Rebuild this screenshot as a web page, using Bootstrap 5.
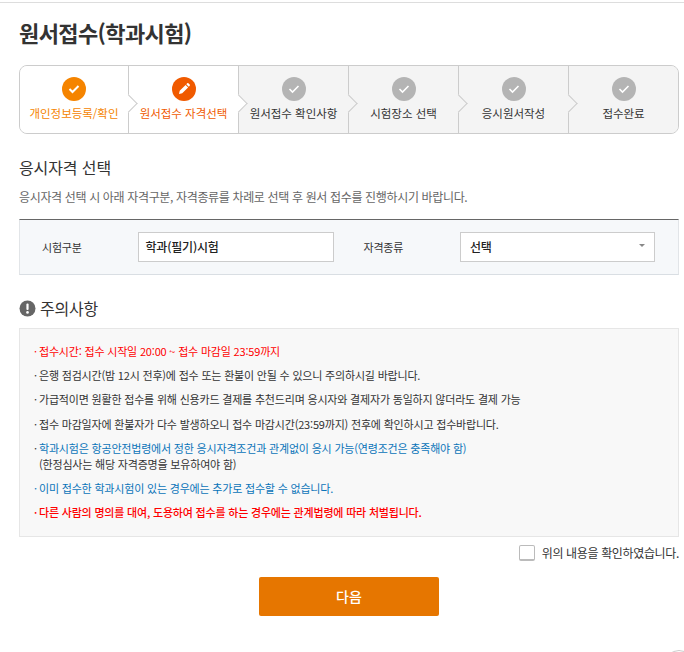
<!doctype html>
<html lang="ko">
<head>
<meta charset="utf-8">
<title>원서접수</title>
<link href="https://cdn.jsdelivr.net/npm/bootstrap@5.3.0/dist/css/bootstrap.min.css" rel="stylesheet">
<style>
html,body{height:652px;overflow:hidden;background:#fff}
body{font-family:"Noto Sans CJK KR","Noto Sans",sans-serif;font-size:11px;color:#333;letter-spacing:-.2px;position:relative}
.topline{height:3px;border-bottom:1px solid #ddd;background:#fff}
.wrap{padding:0 5px 0 19px}
.ptitle{font-size:22px;font-weight:700;line-height:34px;margin:12px 0 16px;color:#333;letter-spacing:-.6px}
.stepbar{height:69px;border:1px solid #ccc;border-radius:8px;background:#f4f4f4;overflow:hidden}
.stepitem{width:110px;position:relative;border-left:1px solid #ccc;padding-top:11px;font-size:11.5px;line-height:16px;color:#333;letter-spacing:-.02px}
.stepitem:first-child{border-left:0;width:108px}
.stepitem:last-child{flex:1 1 auto}
.stepitem.on{background:#fff}
.stepitem:not(:last-child)::after{content:"";position:absolute;right:-7px;top:31px;width:13px;height:13px;background:inherit;border-top:1px solid #ccc;border-right:1px solid #ccc;transform:rotate(45deg) ;z-index:2}
.stepitem:not(.on){background:#f4f4f4}
.stepdot{width:24px;height:24px;border-radius:50%;background:#b4b4b4;margin-bottom:4px}
.dot-a{background:#f58400}.dot-b{background:#f05a00}
.txt-a{color:#f58400}.txt-b{color:#f05a00}
.sechead{font-size:16px;font-weight:400;line-height:24px;margin:21px 0 10px;color:#333;letter-spacing:-.1px}
.secsub{font-size:12px;line-height:16px;color:#666;margin:0 0 14px;letter-spacing:-.35px}
.selbox{height:56px;background:#f6f8fa;border-top:1px solid #666;border-bottom:1px solid #d9dee3;border-left:1px solid #e2e5e8;border-right:1px solid #e2e5e8;padding-left:22px;padding-right:23px}
.sellabel{font-size:11px;color:#333;width:97px}
.selfield{height:30px;width:197px;border:1px solid #ccc;background:#fff;color:#222;font-size:12px;font-weight:500;padding:0 6px;border-radius:0}
.sellabel2{width:97px;margin-left:29px}
.selfield2{width:196px;padding:0 9px;position:relative}
.caret{width:0;height:0;border-left:3px solid transparent;border-right:3px solid transparent;border-top:3px solid #888;margin-top:-4px}
.warnhead{font-size:16px;line-height:24px;margin:21px 0 8px;font-weight:400;color:#333}
.warnicon{margin-right:4px}
.noticebox{height:209px;border:1px solid #e6e6e6;background:#f8f8f8;padding:14px 14px 0;font-size:11px;color:#333;letter-spacing:-.19px}
.noticebox p{margin:0 0 8.2px;line-height:16px;padding-left:5px;position:relative}
.noticebox p::before{content:"·";position:absolute;left:0;top:0}
.c-red{color:#f00}.c-blue{color:#0a74b8}.c-redb{color:#f00;font-weight:500}
.agree{height:18px;margin-top:7px;gap:6px;font-size:12px;color:#333;letter-spacing:-.35px}
.tickbox{width:16px;height:16px;border:1px solid #bbb;border-bottom-width:2px;border-radius:2px;background:#fff;margin-right:1px}
.nextbtn{width:180px;height:39px;background:#e67600;border:0;border-radius:2px;color:#fff;font-size:14px;font-weight:500;margin:15px 0 0 240px;display:block;padding:0}
.nextbtn:hover{background:#e67600;color:#fff}
.topfab{position:absolute;left:664px;top:650px;width:30px;height:30px;border:1px solid #ccc;border-radius:50%;background:#fff}
</style>
</head>
<body>
<div class="topline"></div>
<main class="wrap">
  <h1 class="ptitle">원서접수(학과시험)</h1>

  <div class="stepbar d-flex">
    <div class="stepitem on d-flex flex-column align-items-center">
      <div class="stepdot dot-a d-flex align-items-center justify-content-center"><svg width="12" height="10" viewBox="0 0 12 10"><path d="M1.5 5l3 3 6-6" fill="none" stroke="#fff" stroke-width="2"/></svg></div>
      <span class="txt-a">개인정보등록/확인</span>
    </div>
    <div class="stepitem on d-flex flex-column align-items-center">
      <div class="stepdot dot-b d-flex align-items-center justify-content-center"><svg width="14" height="14" viewBox="0 0 14 14"><path d="M2 12l.7-3.2 5.9-5.9 2.5 2.5-5.9 5.9zM9.3 2.2l.9-.9a.9.9 0 0 1 1.2 0l1.3 1.3a.9.9 0 0 1 0 1.2l-.9.9z" fill="#fff"/></svg></div>
      <span class="txt-b">원서접수 자격선택</span>
    </div>
    <div class="stepitem d-flex flex-column align-items-center">
      <div class="stepdot d-flex align-items-center justify-content-center"><svg width="12" height="10" viewBox="0 0 12 10"><path d="M1.5 5l3 3 6-6" fill="none" stroke="#fff" stroke-width="1.6"/></svg></div>
      <span>원서접수 확인사항</span>
    </div>
    <div class="stepitem d-flex flex-column align-items-center">
      <div class="stepdot d-flex align-items-center justify-content-center"><svg width="12" height="10" viewBox="0 0 12 10"><path d="M1.5 5l3 3 6-6" fill="none" stroke="#fff" stroke-width="1.6"/></svg></div>
      <span>시험장소 선택</span>
    </div>
    <div class="stepitem d-flex flex-column align-items-center">
      <div class="stepdot d-flex align-items-center justify-content-center"><svg width="12" height="10" viewBox="0 0 12 10"><path d="M1.5 5l3 3 6-6" fill="none" stroke="#fff" stroke-width="1.6"/></svg></div>
      <span>응시원서작성</span>
    </div>
    <div class="stepitem d-flex flex-column align-items-center">
      <div class="stepdot d-flex align-items-center justify-content-center"><svg width="12" height="10" viewBox="0 0 12 10"><path d="M1.5 5l3 3 6-6" fill="none" stroke="#fff" stroke-width="1.6"/></svg></div>
      <span>접수완료</span>
    </div>
  </div>

  <h2 class="sechead">응시자격 선택</h2>
  <p class="secsub">응시자격 선택 시 아래 자격구분, 자격종류를 차례로 선택 후 원서 접수를 진행하시기 바랍니다.</p>

  <div class="selbox d-flex align-items-center">
    <span class="sellabel">시험구분</span>
    <div class="selfield d-flex align-items-center">학과(필기)시험</div>
    <span class="sellabel sellabel2">자격종류</span>
    <div class="selfield selfield2 d-flex align-items-center justify-content-between"><span>선택</span><span class="caret"></span></div>
  </div>

  <h2 class="warnhead d-flex align-items-center"><svg width="17" height="17" viewBox="0 0 17 17" class="warnicon"><circle cx="8.5" cy="8.5" r="8" fill="#666"/><rect x="7.4" y="3.5" width="2.2" height="6.5" rx="1" fill="#fff"/><circle cx="8.5" cy="12.4" r="1.3" fill="#fff"/></svg>주의사항</h2>

  <div class="noticebox">
    <p class="c-red">접수시간: 접수 시작일 20:00 ~ 접수 마감일 23:59까지</p>
    <p>은행 점검시간(밤 12시 전후)에 접수 또는 환불이 안될 수 있으니 주의하시길 바랍니다.</p>
    <p>가급적이면 원활한 접수를 위해 신용카드 결제를 추천드리며 응시자와 결제자가 동일하지 않더라도 결제 가능</p>
    <p>접수 마감일자에 환불자가 다수 발생하오니 접수 마감시간(23:59까지) 전후에 확인하시고 접수바랍니다.</p>
    <p><span class="c-blue">학과시험은 항공안전법령에서 정한 응시자격조건과 관계없이 응시 가능(연령조건은 충족해야 함)</span><br>(한정심사는 해당 자격증명을 보유하여야 함)</p>
    <p class="c-blue">이미 접수한 학과시험이 있는 경우에는 추가로 접수할 수 없습니다.</p>
    <p class="c-redb">다른 사람의 명의를 대여, 도용하여 접수를 하는 경우에는 관계법령에 따라 처벌됩니다.</p>
  </div>

  <div class="agree d-flex align-items-center justify-content-end"><span class="tickbox"></span><span>위의 내용을 확인하였습니다.</span></div>

  <button type="button" class="btn nextbtn">다음</button>
</main>
<div class="topfab"></div>
<script src="https://cdn.jsdelivr.net/npm/bootstrap@5.3.0/dist/js/bootstrap.bundle.min.js"></script>
</body>
</html>
